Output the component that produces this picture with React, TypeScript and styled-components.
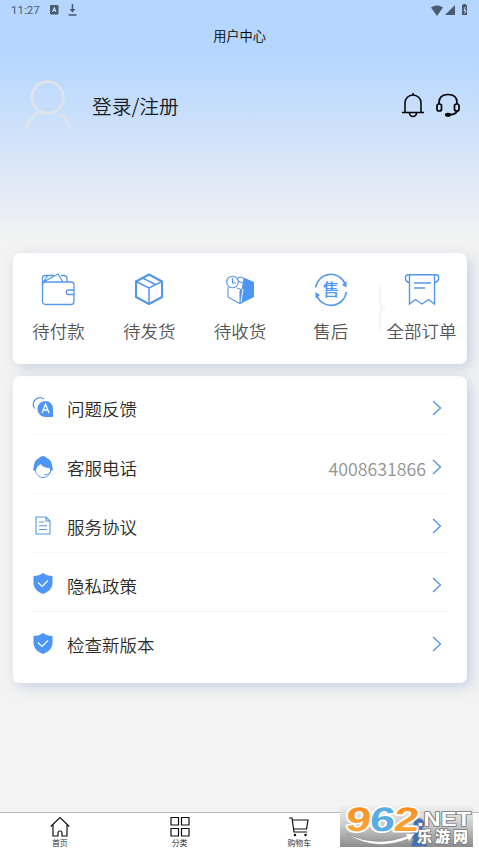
import React from 'react';
import styled, { createGlobalStyle } from 'styled-components';

const blue = '#4d96f5';
const line = '#5598e8';

const Global = createGlobalStyle`
  * { box-sizing: border-box; }
  body {
    margin: 0;
    background: #fff;
    font-family: "Noto Sans CJK SC", sans-serif;
    font-weight: 350;
  }
`;

const Screen = styled.div`
  width: 479px;
  height: 853px;
  display: flex;
  flex-direction: column;
  overflow: hidden;
  background: linear-gradient(180deg, #b4d6ff 0px, #b4d6ff 52px, #d0e2fa 134px, #f3f3f3 242px, #f3f3f3 100%);
`;

const StatusBar = styled.div`
  height: 20px;
  display: flex;
  align-items: center;
  padding: 0 11px;
  font: 400 11.5px/20px Roboto, sans-serif;
  color: #4a5a70;
`;

const StatusIcons = styled.div<{ $gap: number; $right?: boolean }>`
  display: flex;
  align-items: center;
  gap: ${p => p.$gap}px;
  margin-left: ${p => (p.$right ? 'auto' : '10px')};
`;

const Title = styled.h1`
  margin: 0;
  height: 32px;
  font-size: 13.2px;
  font-weight: 350;
  line-height: 32px;
  text-align: center;
  color: #000;
`;

const Profile = styled.div`
  height: 200px;
  display: flex;
  align-items: flex-start;
  padding: 28px 18px 0 24px;
`;

const LoginText = styled.div`
  margin: 11px auto 0 20px;
  font-size: 19.8px;
  line-height: 30px;
  color: #161c22;
`;

const Actions = styled.div`
  display: flex;
  gap: 10px;
  margin-top: 12px;
`;

const Card = styled.section`
  margin: 0 12px 0 13px;
  border-radius: 7px;
  background: #fff;
  box-shadow: 4px 4px 13px rgba(160, 180, 208, 0.5);
`;

const OrderCard = styled(Card)`
  height: 111px;
  display: grid;
  grid-template-columns: repeat(5, 90.8px);
  margin-top: 1px;
  position: relative;
`;

const OrderItem = styled.div`
  display: flex;
  flex-direction: column;
  align-items: center;
  padding-top: 19px;
  font-size: 17.5px;
  line-height: 26px;
  white-space: nowrap;
  color: #555;
  & > svg { margin-bottom: 10px; flex: none; }
`;

const Notch = styled.svg`
  position: absolute;
  left: 366px;
  top: 30px;
`;

const MenuCard = styled(Card)`
  height: 307px;
  margin-top: 12.4px;
  padding: 0 19px;
`;

const MenuRow = styled.div`
  height: 58.85px;
  display: flex;
  align-items: center;
  padding: 6px 6px 0 0;
  border-bottom: 1px solid #f6f6f6;
  &:last-child { border-bottom: 0; }
`;

const MenuIcon = styled.div`
  width: 22px;
  height: 24px;
  margin-bottom: 3px;
`;

const MenuLabel = styled.div`
  margin: 2px auto 0 13px;
  font-size: 17.5px;
  line-height: 26px;
  color: #2a2a2a;
`;

const Phone = styled.div`
  margin: 2px 6px 0 0;
  font-size: 17.8px;
  line-height: 26px;
  color: #929292;
`;

const TabBar = styled.nav`
  height: 41px;
  margin-top: auto;
  display: grid;
  grid-template-columns: repeat(4, 1fr);
  border-top: 1px solid #b9b9b9;
  background: #fff;
  position: relative;
`;

const Tab = styled.div<{ $active?: boolean }>`
  display: flex;
  flex-direction: column;
  align-items: center;
  padding-top: 3px;
  font-size: 8px;
  line-height: 12px;
  color: ${p => (p.$active ? '#3568b5' : '#222')};
  & > svg { flex: none; }
`;

const Watermark = styled.div`
  position: absolute;
  right: 6px;
  top: -10px;
  width: 133px;
  height: 44px;
  background: linear-gradient(180deg, rgba(246, 246, 246, 0.85), rgba(190, 190, 190, 0.8) 50%, rgba(115, 115, 115, 0.82));
  & > svg { display: block; overflow: visible; }
`;

const Chevron = () => (
  <svg width="10" height="16" viewBox="0 0 10 16" fill="none" stroke={line} strokeWidth="1.4">
    <path d="M1 1l7.5 7L1 15" />
  </svg>
);

const Avatar = () => (
  <svg width="48" height="50" viewBox="0 0 48 50" fill="none" stroke="#e0e4e9" strokeWidth="2.6">
    <circle cx="23.6" cy="17.500" r="15.800" />
    <path d="M2.500 49.500C3 42 8 35 15.500 32M36 34c5 4 9 9 9.500 15.500" />
  </svg>
);

const Bell = () => (
  <svg width="24" height="26" viewBox="0 0 24 26" fill="none" stroke="#000" strokeWidth="1.5">
    <path d="M12 1v2M4 20V11a8 8 0 0116 0v9M1 20.500h22M8.500 21a3.500 3.500 0 007 0" />
  </svg>
);

const Headset = () => (
  <svg width="26" height="26" viewBox="0 0 26 26" fill="none" stroke="#000" strokeWidth="1.7">
    <path d="M4 12V10.500c0-5 3-8 9-8s9 3 9 8V12M22 19c-.5 2.500-3 3.500-7 3.700" />
    <rect x="2" y="12" width="4.500" height="7" rx="2" />
    <rect x="19.500" y="12" width="4.500" height="7" rx="2" />
    <ellipse cx="13" cy="22.700" rx="2.200" ry="1.200" fill="#000" />
  </svg>
);

const Wallet = () => (
  <svg width="36" height="36" viewBox="0 0 36 36" fill="none" stroke={line} strokeWidth="1.3">
    <rect x="2.500" y="10" width="31.500" height="22.500" rx="3" />
    <path d="M2.500 13V6.500a3 3 0 013-3H14M3.500 10L18 2l5 8M21 3.500h3a3 3 0 013 3V10M3.500 10L7.500 4M34 18h-5.500a2.200 2.200 0 000 4.500H34" />
  </svg>
);

const Box = () => (
  <svg width="36" height="36" viewBox="0 0 36 36" fill="none" stroke={line}>
    <path strokeWidth="2.100" d="M18 2.500l13 7v15.500l-13 7-13-7v-15.500z" />
    <path strokeWidth="1.500" d="M5 9.500l13 6.500 13-6.500M18 16v16M11.500 6l13 6.500" />
  </svg>
);

const Received = () => (
  <svg width="36" height="36" viewBox="0 0 36 36" fill="none" stroke={line} strokeWidth="1.100">
    <path d="M6 15v10l12 6.800M18 19v12" />
    <path d="M18 32V19l3.500-13.500L32 10v15z" fill={blue} stroke="none" />
    <path d="M15 7q4-4 7 0l-2 11-5-2M16 9l5 2" fill="#fff" />
    <path d="M21 17l-2 13" stroke="#fff" strokeWidth="1" />
    <circle cx="10.500" cy="10" r="5.800" fill="#fff" />
    <path d="M10.500 6v5H14" />
  </svg>
);

const AfterSale = () => (
  <svg width="36" height="36" viewBox="0 0 36 36" fill="none" stroke={line} strokeWidth="1.600">
    <path d="M2.700 15.500A15.300 15.300 0 0132 11.800M33.300 20A15.300 15.300 0 014 24" />
    <path d="M33.500 9v6.500L29 13zM2.500 26.500V20L7 23z" fill={blue} stroke="none" />
    <text x="18" y="24" textAnchor="middle" fontSize="16.500" fontWeight="500" fill={blue} stroke="none">售</text>
  </svg>
);

const Receipt = () => (
  <svg width="38" height="36" viewBox="0 0 38 36" fill="none" stroke={line} strokeWidth="1.400">
    <path d="M6.500 10.500H5.500q-3.200-1.500-3.200-4.500T5 2.700h28q2.700 0 2.700 3.300t-3.200 4.500h-1M6.500 3v29l6-4.500 6.500 4.500 6.500-4.500 6 4.500V3" />
    <path strokeWidth="1.700" d="M11 11h17M11 16h11" />
  </svg>
);

const Feedback = () => (
  <svg width="22" height="24" viewBox="0 0 22 24">
    <path d="M2.500 13.500Q-.5 8 3.500 4.500T12 4" fill="none" stroke={blue} strokeWidth="1.300" />
    <path d="M13.500 6a7.500 7.500 0 017.500 7.500V22h-7.500a8 8 0 010-16z" fill={blue} />
    <path d="M10 18l3.500-9 3.500 9M11.300 15h4.500" fill="none" stroke="#fff" strokeWidth="1.300" />
  </svg>
);

const Agent = () => (
  <svg width="22" height="24" viewBox="0 0 22 24">
    <path d="M1 16l1-5a9 9 0 015-7q4-4 8 0a9 9 0 015 7l1 5-2.500 1-1-3q-6 0-9-4l-3.500 3-1 4z" fill={blue} />
    <path d="M3 16q2 7.500 8 7.500t8-7.500M19 17q-2 4-7 4" fill="none" stroke={blue} strokeWidth=".9" />
  </svg>
);

const Document = () => (
  <svg width="22" height="24" viewBox="0 0 22 24" fill="none" stroke={line} strokeWidth="1.100">
    <path d="M4 4h10l4 4v13H4zM14 4v4h4M7 9h5M7 12.700h8M7 16.500h8" />
  </svg>
);

const Shield = () => (
  <svg width="22" height="24" viewBox="0 0 22 24">
    <path d="M11 2q4 3 9.500 3v8q-1 7-9.500 10-8.500-3-9.500-10V5Q7 5 11 2z" fill={blue} />
    <path d="M6 11.500l4 4 6-6" fill="none" stroke="#fff" strokeWidth="1.100" />
  </svg>
);

const orders = [
  { label: '待付款', Icon: Wallet },
  { label: '待发货', Icon: Box },
  { label: '待收货', Icon: Received },
  { label: '售后', Icon: AfterSale },
  { label: '全部订单', Icon: Receipt },
];

const menu = [
  { label: '问题反馈', Icon: Feedback },
  { label: '客服电话', Icon: Agent, phone: '4008631866' },
  { label: '服务协议', Icon: Document },
  { label: '隐私政策', Icon: Shield },
  { label: '检查新版本', Icon: Shield },
];

export default function App() {
  return (
    <>
      <Global />
      <Screen>
        <StatusBar>
          11:27
          <StatusIcons $gap={9}>
            <svg width="9" height="10" viewBox="0 0 9 10">
              <rect width="8.500" height="9.500" rx="1" fill="#4a5a70" />
              <path d="M2.500 7l1.800-4.500L6 7M3 5.500h2.500" fill="none" stroke="#d5e5fa" />
            </svg>
            <svg width="9" height="12" viewBox="0 0 9 12" fill="none" stroke="#4a5a70" strokeWidth="1.500">
              <path d="M4.500 0v7M.5 11h8" />
              <path d="M1.500 5h6l-3 3.500z" fill="#4a5a70" stroke="none" />
            </svg>
          </StatusIcons>
          <StatusIcons $gap={2} $right>
            <svg width="12" height="11" viewBox="0 0 12 11"><path d="M0 2.500Q6-1.500 12 2.500L6 11z" fill="#4a5a70" /></svg>
            <svg width="10" height="10" viewBox="0 0 10 10"><path d="M10 0v10H0z" fill="#4a5a70" /></svg>
            <svg width="11" height="12" viewBox="0 0 11 12">
              <path d="M5 1h1V0h3v1h1v10H5z" fill="#4a5a70" />
              <path d="M8.300 3L7 6.500h2L7.500 9.500" fill="none" stroke="#d5e5fa" strokeWidth=".9" />
            </svg>
          </StatusIcons>
        </StatusBar>
        <Title>用户中心</Title>
        <Profile>
          <Avatar />
          <LoginText>登录/注册</LoginText>
          <Actions><Bell /><Headset /></Actions>
        </Profile>
        <OrderCard>
          {orders.map(({ label, Icon }) => (
            <OrderItem key={label}><Icon />{label}</OrderItem>
          ))}
          <Notch width="8" height="50" viewBox="0 0 8 50"><path d="M0 3h2v17l5 5-5 5v18H0z" fill="#f7f7f7" /></Notch>
        </OrderCard>
        <MenuCard>
          {menu.map(({ label, Icon, phone }) => (
            <MenuRow key={label}>
              <MenuIcon><Icon /></MenuIcon>
              <MenuLabel>{label}</MenuLabel>
              {phone && <Phone>{phone}</Phone>}
              <Chevron />
            </MenuRow>
          ))}
        </MenuCard>
        <TabBar>
          <Tab>
            <svg width="20" height="21" viewBox="0 0 20 21" fill="none" stroke="#111" strokeWidth="1.200">
              <path d="M.7 10.500L10 1.500l9.300 9M3 9v11h5v-3a2 2 0 014 0v3h5V9" />
            </svg>
            首页
          </Tab>
          <Tab>
            <svg width="20" height="21" viewBox="0 0 20 21" fill="none" stroke="#111" strokeWidth="1.200">
              <path d="M1 1.500h7.500V9H1zM11.500 1.500H19V9h-7.500zM1 12.500h7.500V20H1zM11.500 12.500H19V20h-7.500z" />
            </svg>
            分类
          </Tab>
          <Tab>
            <svg width="20" height="21" viewBox="0 0 20 21" fill="none" stroke="#111" strokeWidth="1.200">
              <path d="M0 2h3l2 14h13M3.500 4H19l-1.500 9H4.700" />
              <circle cx="6" cy="19" r=".7" /><circle cx="16.500" cy="19" r=".7" />
            </svg>
            购物车
          </Tab>
          <Tab $active>
            <svg width="20" height="21" viewBox="0 0 20 21" fill="#3568b5">
              <circle cx="10" cy="6" r="4.500" /><path d="M2 12h16v4h-3v5H5v-5H2z" />
            </svg>
            我的
          </Tab>
          <Watermark>
            <svg width="133" height="44" viewBox="0 0 133 44">
              <defs>
                <linearGradient id="orange" x1="0" y1="0" x2="0" y2="1">
                  <stop offset="0" stopColor="#f58a1f" /><stop offset="1" stopColor="#ffab3b" />
                </linearGradient>
              </defs>
              <circle cx="79" cy="21" r="5.500" fill="#3f72b8" />
              <path d="M70 30q9-6 18 0v5l-4 1 3 7H71l3-7-4-2z" fill="#3f72b8" />
              <g fontFamily="Liberation Sans, sans-serif" fontWeight="700" paintOrder="stroke" strokeLinejoin="round">
                <g fontSize="34" stroke="#fff" strokeWidth="3.200" transform="translate(4 0) skewX(-6)">
                  <text x="4" y="28" textLength="25" lengthAdjust="spacingAndGlyphs" fill="url(#orange)">9</text>
                  <text x="28" y="28" textLength="25" lengthAdjust="spacingAndGlyphs" fill="#5aade3">6</text>
                  <text x="52" y="28" textLength="25" lengthAdjust="spacingAndGlyphs" fill="url(#orange)">2</text>
                </g>
                <text x="77" y="22.500" fontSize="19.500" textLength="54" lengthAdjust="spacingAndGlyphs" fill="#fff" stroke="#777" strokeWidth="1.600">.NET</text>
              </g>
              <path d="M7 31q30 14 60 2l-3-2 11-1-6 9-1-3Q35 49 7 31z" fill="#fff" stroke="#888" strokeWidth=".5" />
              <text x="77" y="39" fontSize="15" fontWeight="900" textLength="51" fill="#fff" stroke="#777" strokeWidth="1.500" paintOrder="stroke">乐游网</text>
            </svg>
          </Watermark>
        </TabBar>
      </Screen>
    </>
  );
}
